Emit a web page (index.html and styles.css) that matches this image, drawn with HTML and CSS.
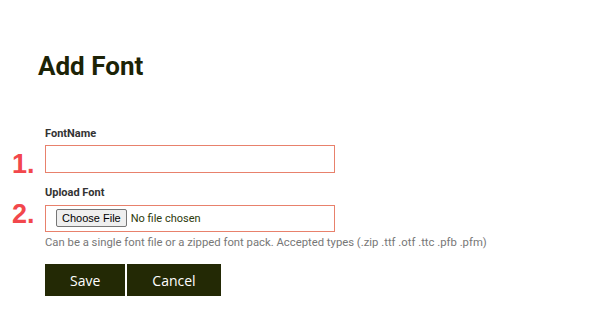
FILE: index.html
```html
<!DOCTYPE html>
<html lang="en">
<head>
<meta charset="utf-8">
<title>Add Font</title>
<link rel="stylesheet" href="styles.css">
</head>
<body>
<main class="page">
  <h1 class="title">Add Font</h1>
  <form class="form">
    <div class="field">
      <label class="label" for="fontname">FontName</label>
      <div class="control">
        <span class="marker marker-1">1.</span>
        <input class="text-input" id="fontname" type="text">
      </div>
    </div>
    <div class="field field-upload">
      <label class="label" for="fontfile">Upload Font</label>
      <div class="control">
        <span class="marker marker-2">2.</span>
        <input class="file-input" id="fontfile" type="file">
      </div>
      <p class="help">Can be a single font file or a zipped font pack. Accepted types (.zip .ttf .otf .ttc .pfb .pfm)</p>
    </div>
    <div class="actions">
      <button class="btn" type="button">Save</button>
      <button class="btn" type="button">Cancel</button>
    </div>
  </form>
</main>
</body>
</html>
```
FILE: styles.css
```css
html, body {
  margin: 0;
  padding: 0;
  background: #ffffff;
}
body {
  font-family: Roboto, "Liberation Sans", Arial, sans-serif;
  color: #333333;
}
.page {
  padding-left: 38px;
}
.title {
  margin: 51px 0 0;
  font-size: 26px;
  line-height: 30px;
  font-weight: 700;
  color: #1c2306;
}
.form {
  margin-top: 46px;
  padding-left: 7px;
  display: flex;
  flex-direction: column;
}
.field {
  display: flex;
  flex-direction: column;
}
.field-upload {
  margin-top: 13px;
}
.label {
  font-size: 11px;
  line-height: 13px;
  font-weight: 700;
  color: #333333;
  margin-bottom: 5px;
}
.field-upload .label {
  margin-bottom: 6px;
}
.control {
  position: relative;
}
.marker {
  position: absolute;
  left: -33px;
  font-family: "Liberation Sans", Arial, sans-serif;
  font-weight: 700;
  font-size: 27px;
  line-height: 28px;
  color: #f2474c;
}
.marker-1 {
  top: 5px;
}
.marker-2 {
  top: -5px;
}
.text-input {
  box-sizing: border-box;
  display: block;
  width: 290px;
  height: 28px;
  margin: 0;
  border: 1px solid #e8816c;
  border-radius: 0;
  padding: 0 8px;
  font-family: Roboto, sans-serif;
  font-size: 12px;
  outline: none;
}
.file-input {
  box-sizing: border-box;
  display: block;
  width: 290px;
  height: 27px;
  margin: 0;
  border: 1px solid #e8816c;
  padding: 0 10px;
  font-family: Roboto, sans-serif;
  font-size: 11px;
  color: #2e3a0c;
  line-height: 25px;
}
.file-input::file-selector-button {
  font-family: "Liberation Sans", Arial, sans-serif;
  font-size: 11px;
  color: #000000;
  background: #efefef;
  border: 1px solid #767676;
  border-radius: 2px;
  padding: 2px 5px;
  margin: 0 4px 0 0;
}
.help {
  margin: 4px 0 0;
  font-size: 11.3px;
  line-height: 14px;
  color: #777777;
}
.actions {
  margin-top: 14px;
  display: flex;
  gap: 2px;
}
.btn {
  height: 32px;
  padding: 0 25px;
  border: 0;
  border-radius: 0;
  background: #232905;
  color: #ffffff;
  font-family: "Open Sans", Roboto, sans-serif;
  font-size: 14px;
  cursor: pointer;
}
```
